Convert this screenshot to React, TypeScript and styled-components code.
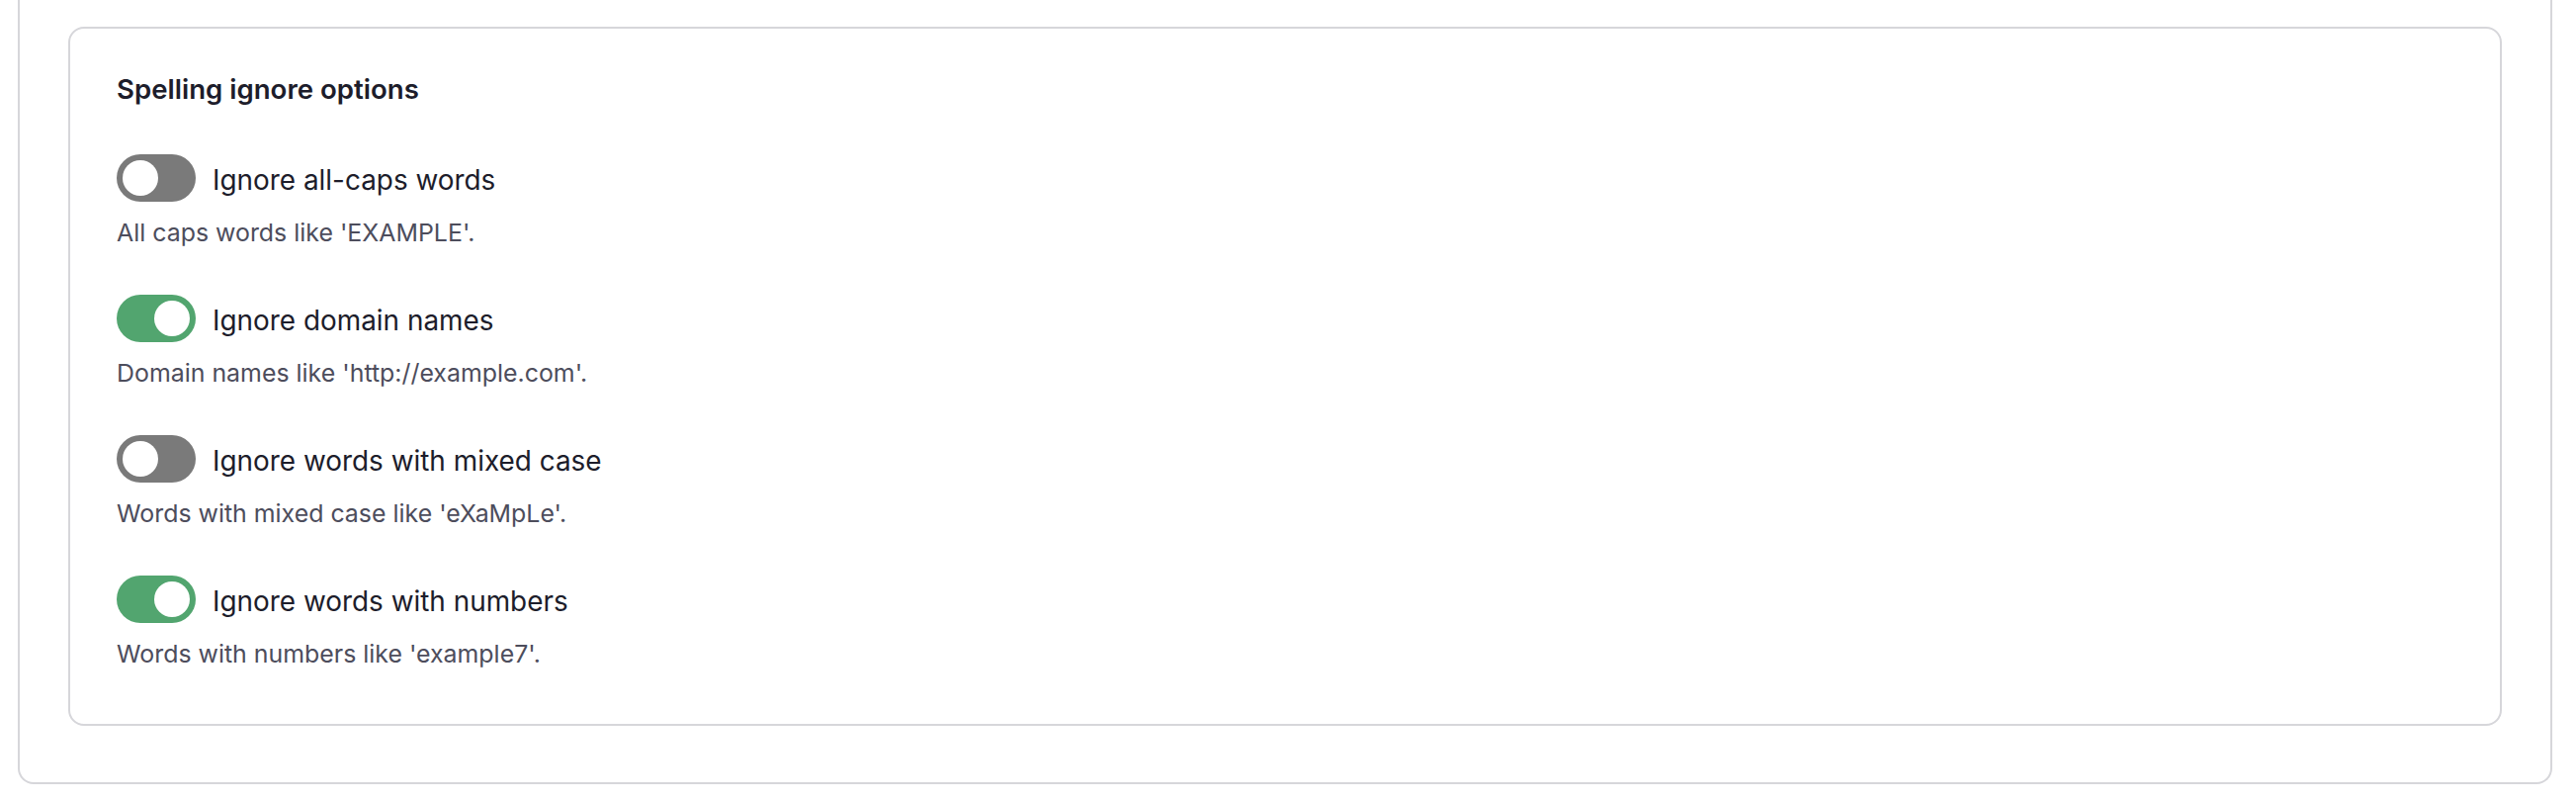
import React, { useState } from "react";
import styled, { createGlobalStyle } from "styled-components";

const Global = createGlobalStyle`
  html, body { margin: 0; padding: 0; background: #ffffff; }
  body { font-family: Inter, "Noto Sans", sans-serif; }
  * { box-sizing: border-box; }
`;

const Page = styled.div`
  padding: 0 24px 18px 18px;
`;

const OuterPanel = styled.div`
  border: 2px solid #d6d6da;
  border-top: 0;
  border-radius: 0 0 16px 16px;
  padding: 27px 49px 57px 49px;
`;

const Card = styled.section`
  border: 2px solid #d6d6da;
  border-radius: 16px;
  padding: 41px 47px 54px 47px;
  display: flex;
  flex-direction: column;
  gap: 46px;
`;

const Heading = styled.h2`
  margin: 0;
  font-size: 27.6px;
  line-height: 40px;
  font-weight: 600;
  color: #1d1d2b;
`;

const Option = styled.div`
  display: flex;
  flex-direction: column;
  gap: 15px;
`;

const Row = styled.label`
  display: flex;
  align-items: center;
  gap: 17px;
  cursor: pointer;
`;

const Track = styled.button<{ $on: boolean }>`
  width: 80px;
  height: 48px;
  border: 0;
  padding: 0 6px;
  border-radius: 24px;
  background: ${(p) => (p.$on ? "#52a56f" : "#7a7a7a")};
  display: flex;
  align-items: center;
  justify-content: ${(p) => (p.$on ? "flex-end" : "flex-start")};
  cursor: pointer;
  flex-shrink: 0;
`;

const Knob = styled.span`
  width: 36px;
  height: 36px;
  border-radius: 50%;
  background: #ffffff;
`;

const LabelText = styled.span`
  font-size: 27.9px;
  line-height: 40px;
  color: #1d1d2b;
  padding-top: 3px;
`;

const Description = styled.p`
  margin: 0;
  font-size: 24.9px;
  line-height: 33px;
  color: #4d4d5c;
`;

const options = [
  { label: "Ignore all-caps words", desc: "All caps words like 'EXAMPLE'.", on: false },
  { label: "Ignore domain names", desc: "Domain names like 'http://example.com'.", on: true },
  { label: "Ignore words with mixed case", desc: "Words with mixed case like 'eXaMpLe'.", on: false },
  { label: "Ignore words with numbers", desc: "Words with numbers like 'example7'.", on: true },
];

export default function App() {
  const [state, setState] = useState(options.map((o) => o.on));
  return (
    <>
      <Global />
      <Page>
        <OuterPanel>
          <Card>
            <Heading>Spelling ignore options</Heading>
            {options.map((o, i) => (
              <Option key={o.label}>
                <Row>
                  <Track
                    type="button"
                    role="switch"
                    aria-checked={state[i]}
                    $on={state[i]}
                    onClick={() => setState((s) => s.map((v, j) => (j === i ? !v : v)))}
                  >
                    <Knob />
                  </Track>
                  <LabelText>{o.label}</LabelText>
                </Row>
                <Description>{o.desc}</Description>
              </Option>
            ))}
          </Card>
        </OuterPanel>
      </Page>
    </>
  );
}
